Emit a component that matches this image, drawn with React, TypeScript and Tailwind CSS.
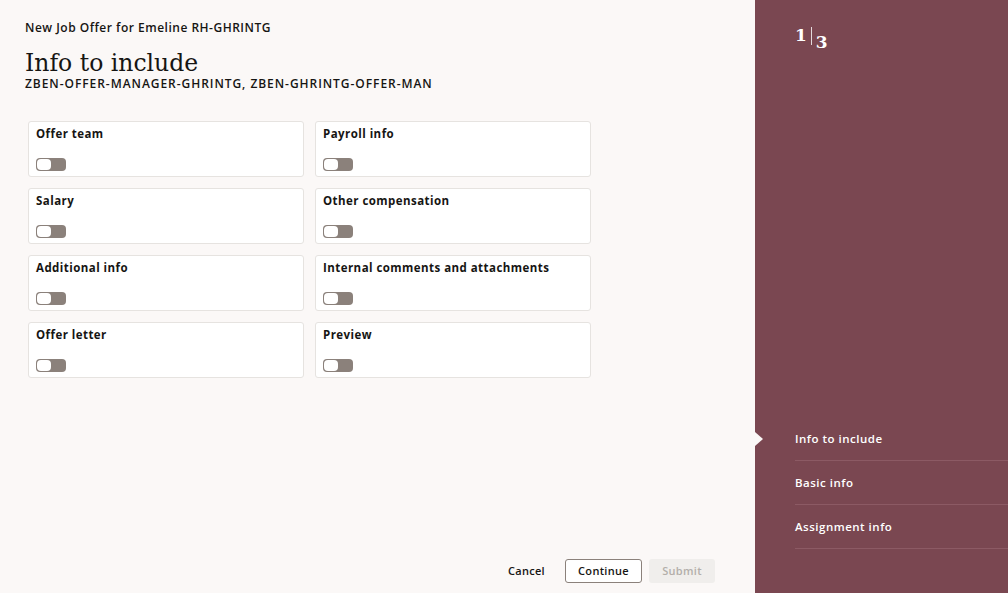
import React from "react";

const sections = [
  "Offer team",
  "Payroll info",
  "Salary",
  "Other compensation",
  "Additional info",
  "Internal comments and attachments",
  "Offer letter",
  "Preview",
];

const steps = ["Info to include", "Basic info", "Assignment info"];

function Toggle() {
  return (
    <div className="w-[30px] h-[13px] rounded-[4px] bg-[#8b817b] relative">
      <div className="absolute left-[1px] top-[1px] w-[14px] h-[11px] rounded-[4px] bg-white" />
    </div>
  );
}

export default function App() {
  return (
    <div
      className="flex w-[1008px] h-[593px] overflow-hidden"
      style={{ fontFamily: '"Open Sans", "Noto Sans", sans-serif' }}
    >
      {/* contenido */}
      <main className="w-[755px] bg-[#fbf8f7] flex flex-col pl-[25px] pr-[40px]">
        <p className="mt-[19px] text-[12px] tracking-[0.5px] font-semibold text-[#161513]">
          New Job Offer for Emeline RH-GHRINTG
        </p>
        <h1
          className="mt-[11px] text-[23.5px] leading-[30px] text-[#161513]"
          style={{ fontFamily: '"DejaVu Serif", "Liberation Serif", serif' }}
        >
          Info to include
        </h1>
        <p className="-mt-[1px] text-[12px] font-semibold tracking-[0.95px] text-[#161513] leading-[14px]">
          ZBEN-OFFER-MANAGER-GHRINTG, ZBEN-GHRINTG-OFFER-MAN
        </p>

        <div className="mt-[30px] ml-[3px] grid grid-cols-[276px_276px] gap-x-[11px] gap-y-[11px]">
          {sections.map((s) => (
            <div
              key={s}
              className="h-[56px] bg-white border border-[#e6e3e0] rounded-[3px] px-[7px] pt-[4px]"
            >
              <p className="text-[11.5px] tracking-[0.45px] font-bold text-[#161513] leading-[16px]">{s}</p>
              <div className="mt-[16px]">
                <Toggle />
              </div>
            </div>
          ))}
        </div>

        <div className="mt-auto mb-[10px] flex items-center justify-end">
          <button className="px-[10px] h-[23px] mr-[10px] text-[11px] tracking-[0.3px] font-semibold text-[#161513]">
            Cancel
          </button>
          <button className="w-[77px] h-[24px] mr-[7px] border border-[#8b817b] rounded-[3px] bg-white text-[11px] tracking-[0.3px] font-semibold text-[#161513]">
            Continue
          </button>
          <button className="w-[66px] h-[24px] rounded-[3px] bg-[#f0eeec] text-[11px] tracking-[0.3px] font-semibold text-[#b3aeaa]">
            Submit
          </button>
        </div>
      </main>

      {/* PANEL DE PASOS */}
      <aside className="flex-1 bg-[#7a4751] relative flex flex-col pl-[40px] text-white">
        <div
          className="mt-[25px] flex items-start text-[17px] font-bold"
          style={{ fontFamily: '"DejaVu Serif", "Liberation Serif", serif' }}
        >
          <span className="leading-[20px]">1</span>
          <span className="mx-[4px] mt-[2px] w-[1px] h-[18px] bg-white/80" />
          <span className="mt-[7px] leading-[20px]">3</span>
        </div>

        <ul className="mt-auto mb-[44px]">
          {steps.map((s, i) => (
            <li
              key={s}
              className="relative h-[44px] flex items-center border-b border-[#8c5a64] text-[11.5px] tracking-[0.5px] font-semibold"
            >
              {i === 0 && (
                <span className="absolute left-[-40px] top-[15px] w-0 h-0 border-y-[7px] border-y-transparent border-l-[8px] border-l-[#fbf8f7]" />
              )}
              {s}
            </li>
          ))}
        </ul>
      </aside>
    </div>
  );
}
